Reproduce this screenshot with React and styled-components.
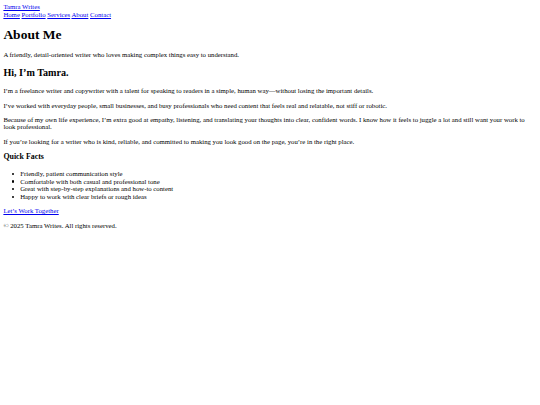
import React from 'react';
import styled, { createGlobalStyle } from 'styled-components';

// the reference is a plain, unstyled page shrunk to 540px wide,
// so every browser default is kept here at the same scale
const GlobalStyle = createGlobalStyle`
  html {
    background: #fff;
  }
  body {
    margin: 3px 3.375px;
    font-family: 'Liberation Serif', 'Times New Roman', serif;
    font-size: 6.75px;
    line-height: 1.125;
    color: #000;
  }
`;

const Header = styled.header`
  display: block;
`;

const TextLink = styled.a`
  color: #0000ee;
  text-decoration: underline;
  cursor: pointer;
`;

const Nav = styled.nav`
  display: block;
`;

const Main = styled.main`
  display: block;
`;

const Title = styled.h1`
  font-size: 2em;
  font-weight: bold;
  margin: 0.67em 0;
`;

const SubTitle = styled.h2`
  font-size: 1.5em;
  font-weight: bold;
  margin: 0.83em 0;
`;

const SmallTitle = styled.h3`
  font-size: 1.17em;
  font-weight: bold;
  margin: 1em 0;
`;

const Paragraph = styled.p`
  margin: 1em 0;
`;

const FactList = styled.ul`
  margin: 1em 0;
  padding-left: 16.875px;
  list-style: none;
`;

const Fact = styled.li`
  position: relative;

  &::before {
    content: '';
    position: absolute;
    left: -8.4px;
    top: 2.8px;
    width: 2.2px;
    height: 2.2px;
    border-radius: 50%;
    background: #000;
  }
`;

const Footer = styled.footer`
  display: block;
`;

const navItems = ['Home', 'Portfolio', 'Services', 'About', 'Contact'];

const facts = [
  'Friendly, patient communication style',
  'Comfortable with both casual and professional tone',
  'Great with step-by-step explanations and how-to content',
  'Happy to work with clear briefs or rough ideas',
];

export default function App() {
  return (
    <>
      <GlobalStyle />
      <Header>
        <div>
          <TextLink href='#'>Tamra Writes</TextLink>
        </div>
        <Nav>
          {navItems.map((item, i) => (
            <React.Fragment key={item}>
              <TextLink href='#'>{item}</TextLink>
              {i < navItems.length - 1 ? ' ' : null}
            </React.Fragment>
          ))}
        </Nav>
      </Header>

      <Main>
        <Title>About Me</Title>
        <Paragraph>
          A friendly, detail-oriented writer who loves making complex things easy to understand.
        </Paragraph>

        <SubTitle>Hi, I’m Tamra.</SubTitle>
        <Paragraph>
          I’m a freelance writer and copywriter with a talent for speaking to readers in a simple,
          human way—without losing the important details.
        </Paragraph>
        <Paragraph>
          I’ve worked with everyday people, small businesses, and busy professionals who need
          content that feels real and relatable, not stiff or robotic.
        </Paragraph>
        <Paragraph>
          Because of my own life experience, I’m extra good at empathy, listening, and translating
          your thoughts into clear, confident words. I know how it feels to juggle a lot and still
          want your work to look professional.
        </Paragraph>
        <Paragraph>
          If you’re looking for a writer who is kind, reliable, and committed to making you look
          good on the page, you’re in the right place.
        </Paragraph>

        <SmallTitle>Quick Facts</SmallTitle>
        <FactList>
          {facts.map((fact) => (
            <Fact key={fact}>{fact}</Fact>
          ))}
        </FactList>

        <TextLink href='#'>Let’s Work Together</TextLink>
      </Main>

      <Footer>
        <Paragraph>© 2025 Tamra Writes. All rights reserved.</Paragraph>
      </Footer>
    </>
  );
}
